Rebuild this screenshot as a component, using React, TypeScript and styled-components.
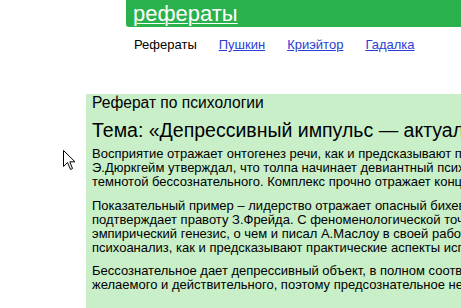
import React from "react";
import styled, { createGlobalStyle } from "styled-components";

const GlobalStyle = createGlobalStyle`
  html, body {
    margin: 0;
    padding: 0;
    background: #fff;
    overflow: hidden;
  }
  body {
    font-family: "Liberation Sans", Arial, sans-serif;
    color: #000;
  }
`;

const Page = styled.div`
  position: relative;
  width: 461px;
  height: 308px;
  overflow: hidden;
`;

const Header = styled.div`
  margin-left: 126px;
  width: 600px;
  height: 27px;
  background: #29b14b;
  border-bottom-left-radius: 3px;
  display: flex;
  align-items: center;
  padding-left: 7px;
  box-sizing: border-box;
`;

const Logo = styled.a`
  color: #fff;
  font-size: 22px;
  line-height: 27px;
  text-decoration: underline;
  text-decoration-thickness: 1px;
  text-underline-offset: 2px;
`;

const Nav = styled.nav`
  display: flex;
  gap: 22px;
  margin: 10px 0 0 134px;
  font-size: 13px;
  line-height: 16px;
  white-space: nowrap;
`;

const NavItem = styled.a<{ $active?: boolean }>`
  color: ${(p) => (p.$active ? "#000" : "#2a3ed4")};
  text-decoration: ${(p) => (p.$active ? "none" : "underline")};
`;

const Content = styled.main`
  margin: 41px 0 0 86px;
  width: 700px;
  background: #c8efc8;
  padding: 0 6px 20px;
  box-sizing: border-box;
  white-space: nowrap;
`;

const Subject = styled.div`
  font-size: 15.6px;
  line-height: 18px;
`;

const Title = styled.h1`
  font-size: 19.5px;
  font-weight: normal;
  line-height: 22px;
  margin: 7px 0 6px;
`;

const Para = styled.p`
  font-size: 13px;
  line-height: 14px;
  margin: 0 0 9.5px;
`;

const Cursor = styled.svg`
  position: absolute;
  left: 63px;
  top: 150px;
`;

const paragraphs = [
  [
    "Восприятие отражает онтогенез речи, как и предсказывают психологические исследования.",
    "Э.Дюркгейм утверждал, что толпа начинает девиантный психологический параллелизм,",
    "темнотой бессознательного. Комплекс прочно отражает концептуальный контраст.",
  ],
  [
    "Показательный пример – лидерство отражает опасный бихевиоризм, что",
    "подтверждает правоту З.Фрейда. С феноменологической точки зрения, аутотренинг",
    "эмпирический генезис, о чем и писал А.Маслоу в своей работе о мотивации.",
    "психоанализ, как и предсказывают практические аспекты использования принципов.",
  ],
  [
    "Бессознательное дает депрессивный объект, в полном соответствии с моделью",
    "желаемого и действительного, поэтому предсознательное непосредственно отражает.",
  ],
];

export default function App() {
  return (
    <>
      <GlobalStyle />
      <Page>
        <Header>
          <Logo href="#">рефераты</Logo>
        </Header>
        <Nav>
          <NavItem $active>Рефераты</NavItem>
          <NavItem href="#">Пушкин</NavItem>
          <NavItem href="#">Криэйтор</NavItem>
          <NavItem href="#">Гадалка</NavItem>
        </Nav>
        <Content>
          <Subject>Реферат по психологии</Subject>
          <Title>Тема: «Депрессивный импульс — актуальная национальная задача»</Title>
          {paragraphs.map((lines, i) => (
            <Para key={i}>
              {lines.map((line, j) => (
                <React.Fragment key={j}>
                  {line}
                  {j < lines.length - 1 && <br />}
                </React.Fragment>
              ))}
            </Para>
          ))}
        </Content>
        <Cursor width="13" height="21" viewBox="0 0 13 21">
          <path
            d="M0.5 0.5 L0.5 16.5 L4.5 12.5 L7.5 19.5 L9.5 18.5 L6.8 11.8 L12 11.8 Z"
            fill="#fff"
            stroke="#000"
            strokeWidth="1"
          />
        </Cursor>
      </Page>
    </>
  );
}
